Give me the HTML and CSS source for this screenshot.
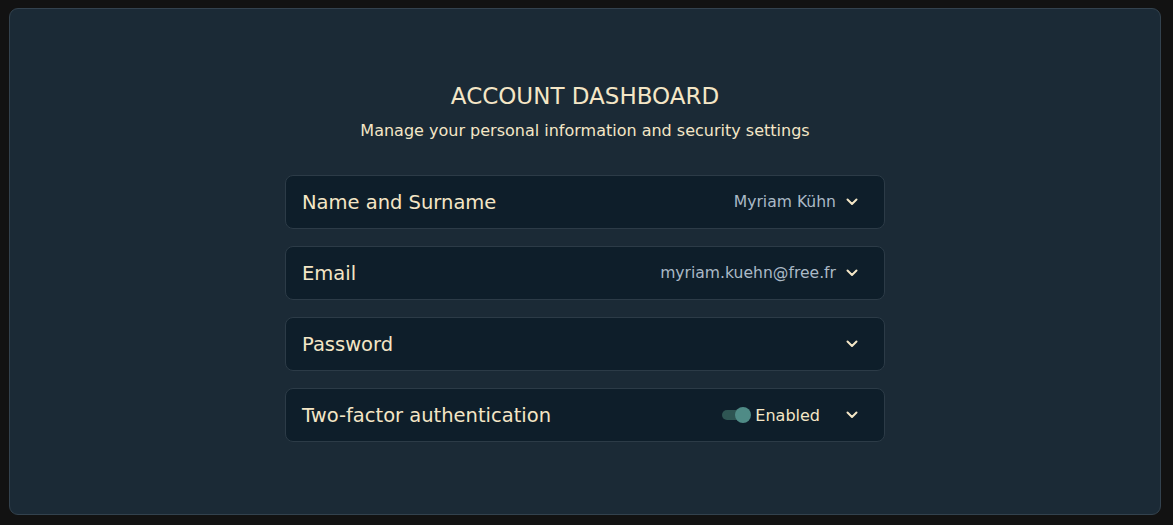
FILE: index.html
```html
<!DOCTYPE html>
<html lang="en">
<head>
<meta charset="utf-8">
<title>Account Dashboard</title>
<link rel="stylesheet" href="styles.css">
</head>
<body>
<main class="card">
  <header class="head">
    <h1 class="title">ACCOUNT DASHBOARD</h1>
    <p class="subtitle">Manage your personal information and security settings</p>
  </header>
  <section class="list">
    <div class="row">
      <span class="label">Name and Surname</span>
      <span class="right"><span class="value">Myriam Kühn</span>
        <svg class="chev" viewBox="0 0 12 8" width="12" height="8"><path d="M1.5 1.5 L6 6 L10.5 1.5"/></svg></span>
    </div>
    <div class="row">
      <span class="label">Email</span>
      <span class="right"><span class="value">myriam.kuehn@free.fr</span>
        <svg class="chev" viewBox="0 0 12 8" width="12" height="8"><path d="M1.5 1.5 L6 6 L10.5 1.5"/></svg></span>
    </div>
    <div class="row">
      <span class="label">Password</span>
      <span class="right">
        <svg class="chev" viewBox="0 0 12 8" width="12" height="8"><path d="M1.5 1.5 L6 6 L10.5 1.5"/></svg></span>
    </div>
    <div class="row">
      <span class="label">Two-factor authentication</span>
      <span class="right"><span class="status"><span class="toggle"><span class="knob"></span></span><span class="enabled">Enabled</span></span>
        <svg class="chev" viewBox="0 0 12 8" width="12" height="8"><path d="M1.5 1.5 L6 6 L10.5 1.5"/></svg></span>
    </div>
  </section>
</main>
</body>
</html>
```
FILE: styles.css
```css
html, body { height: 100%; }
body {
  margin: 0;
  padding: 8px 12px 10px 9px;
  box-sizing: border-box;
  background: #121212;
  font-family: "DejaVu Sans", "Open Sans", sans-serif;
  color: #f4e6c6;
}
.card {
  height: 100%;
  box-sizing: border-box;
  background: #1b2a36;
  border: 1px solid #33424e;
  border-radius: 9px;
  display: flex;
  flex-direction: column;
  align-items: center;
  justify-content: center;
}
.head { text-align: center; margin-bottom: 34px; }
.title {
  margin: 0;
  font-weight: 400;
  font-size: 23px;
  line-height: 30px;
  letter-spacing: 0;
}
.subtitle {
  margin: 10px 0 0;
  font-size: 16px;
  line-height: 20px;
}
.list {
  width: 600px;
  display: flex;
  flex-direction: column;
  gap: 17px;
}
.row {
  height: 54px;
  box-sizing: border-box;
  background: #0e1e2a;
  border: 1px solid #2c3b47;
  border-radius: 8px;
  padding: 0 26px 0 16px;
  display: flex;
  align-items: center;
  justify-content: space-between;
}
.label { font-size: 19.5px; }
.right { display: flex; align-items: center; gap: 10px; }
.value { font-size: 15.6px; color: #aab9c6; }
.chev { fill: none; stroke: #f4e6c6; stroke-width: 2; stroke-linecap: round; stroke-linejoin: round; }
.status { display: flex; align-items: center; margin-right: 16px; }
.toggle {
  position: relative;
  width: 26px;
  height: 10px;
  border-radius: 5px;
  background: #2e5553;
  margin-right: 7px;
}
.knob {
  position: absolute;
  right: -3px;
  top: -3px;
  width: 16px;
  height: 16px;
  border-radius: 50%;
  background: #4f8b86;
}
.enabled { font-size: 16px; color: #f4e6c6; }
```
